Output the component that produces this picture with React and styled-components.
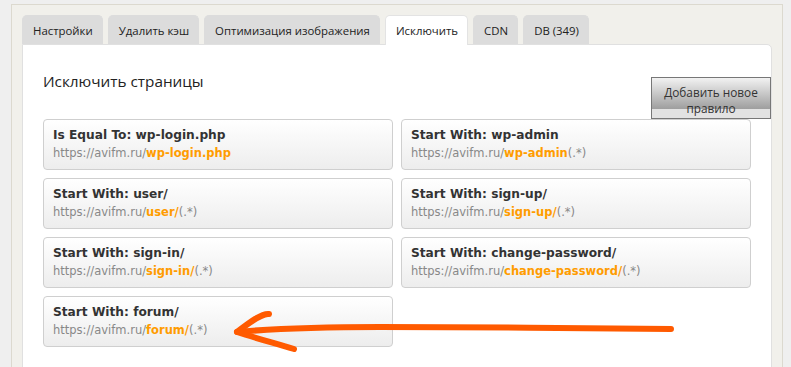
import React from 'react'
import styled, { createGlobalStyle } from 'styled-components'

const GlobalStyle = createGlobalStyle`
  body {
    margin: 0;
    background: #efefef;
    font-family: "Open Sans", "Noto Sans", sans-serif;
  }
`

const Page = styled.div`
  position: relative;
  width: 791px;
  height: 367px;
  overflow: hidden;
`

const Frame = styled.div`
  margin: 4px 8px 0 11px;
  padding: 10px 10px 0 10px;
  height: 400px;
  background: #f1f0eb;
  border: 1px solid #dcd9cf;
`

const Tabs = styled.div`
  display: flex;
  gap: 5px;
  height: 29px;
`

const Tab = styled.div`
  display: flex;
  align-items: center;
  padding: 0 9px 0 10px;
  font-size: 11.4px;
  color: #222;
  border-radius: 5px 5px 0 0;
  background: ${props => props.active ? '#fff' : '#dcdcdc'};
  border: 1px solid ${props => props.active ? '#e3e3e3' : '#dcdcdc'};
  border-bottom: none;
  position: relative;
  z-index: 1;
  margin-bottom: ${props => props.active ? '-1px' : '0'};
`

const Panel = styled.div`
  background: #fff;
  border: 1px solid #e0e0e0;
  border-radius: 0 5px 0 0;
  padding: 0 20px 40px 20px;
  min-height: 320px;
`

const Header = styled.div`
  display: flex;
  justify-content: space-between;
  align-items: flex-start;
  height: 74px;
`

const Heading = styled.h2`
  margin: 0;
  padding-top: 24px;
  font-size: 15.3px;
  font-weight: 400;
  line-height: 24px;
  color: #222;
`

const AddButton = styled.button`
  margin: 32px -20px 0 0;
  width: 120px;
  height: 42px;
  padding: 3px 6px 0;
  border: 1px solid #777;
  background-color: #e2e2e2;
  background-image: linear-gradient(#f2f2f2, #9e9e9e);
  background-size: 100% 31px;
  background-repeat: no-repeat;
  font-family: "Open Sans", "Noto Sans", sans-serif;
  font-size: 11.8px;
  line-height: 16px;
  color: #333;
  text-align: center;
  align-self: flex-start;
`

const Grid = styled.div`
  display: grid;
  grid-template-columns: 350px 350px;
  column-gap: 8px;
  row-gap: 8px;
`

const Card = styled.div`
  height: 51px;
  box-sizing: border-box;
  padding: 6px 9px;
  border: 1px solid #cfcfcf;
  border-radius: 4px;
  background: linear-gradient(#fff, #ededed);
  font-family: "DejaVu Sans", Verdana, sans-serif;
`

const Title = styled.div`
  font-size: 12.2px;
  font-weight: 700;
  line-height: 18px;
  color: #333;
`

const Url = styled.div`
  font-size: 11.5px;
  line-height: 18px;
  color: #888;
`

const Match = styled.span`
  color: #ff9c00;
  font-weight: 700;
`

const Arrow = styled.svg`
  position: absolute;
  left: 0;
  top: 0;
  pointer-events: none;
`

const rules = [
  { type: 'Is Equal To', value: 'wp-login.php', wild: false },
  { type: 'Start With', value: 'wp-admin', wild: true },
  { type: 'Start With', value: 'user/', wild: true },
  { type: 'Start With', value: 'sign-up/', wild: true },
  { type: 'Start With', value: 'sign-in/', wild: true },
  { type: 'Start With', value: 'change-password/', wild: true },
  { type: 'Start With', value: 'forum/', wild: true }
]

const tabs = ['Настройки', 'Удалить кэш', 'Оптимизация изображения', 'Исключить', 'CDN', 'DB (349)']

const App = () => (
  <Page>
    <GlobalStyle />
    <Frame>
      <Tabs>
        {tabs.map(t => (
          <Tab key={t} active={t === 'Исключить'}>{t}</Tab>
        ))}
      </Tabs>
      <Panel>
        <Header>
          <Heading>Исключить страницы</Heading>
          <AddButton>Добавить новое правило</AddButton>
        </Header>
        <Grid>
          {rules.map(r => (
            <Card key={r.value}>
              <Title>{r.type}: {r.value}</Title>
              <Url>
                https://avifm.ru/<Match>{r.value}</Match>{r.wild ? '(.*)' : ''}
              </Url>
            </Card>
          ))}
        </Grid>
      </Panel>
    </Frame>
    <Arrow width="791" height="367" viewBox="0 0 791 367">
      <path
        d="M671 329 C 580 328, 470 327, 380 327 C 320 327, 270 329, 237 332"
        fill="none" stroke="#ff5a00" strokeWidth="6" strokeLinecap="round"
      />
      <path
        d="M269 314 C 262 313, 250 322, 237 332 C 255 338, 278 344, 294 349"
        fill="none" stroke="#ff5a00" strokeWidth="6" strokeLinecap="round" strokeLinejoin="round"
      />
    </Arrow>
  </Page>
)

export default App
